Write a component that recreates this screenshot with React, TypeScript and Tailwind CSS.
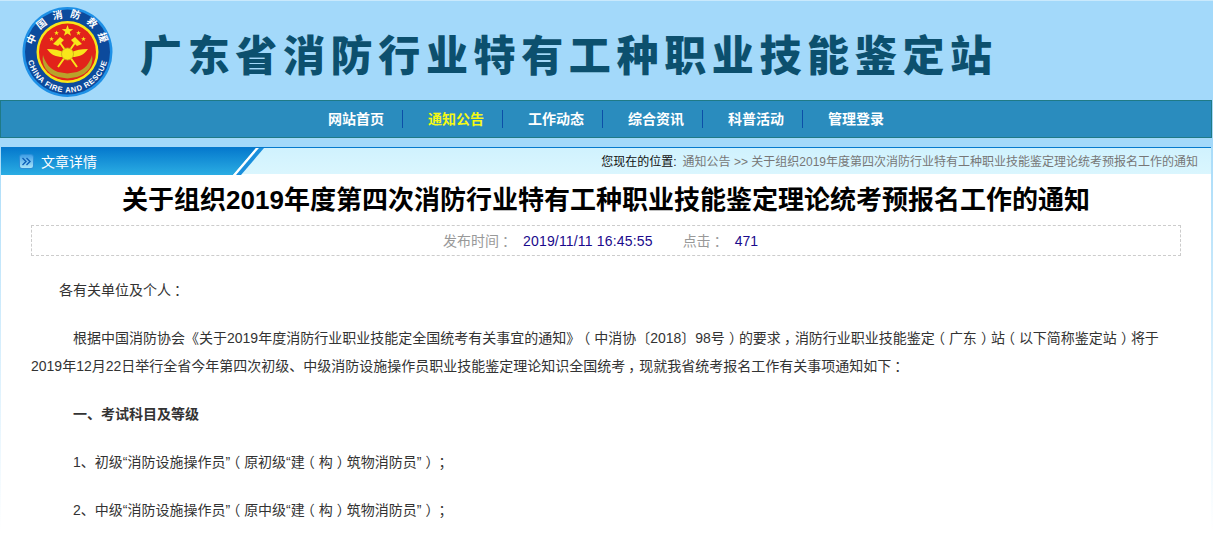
import React from 'react'

const NAV = ['网站首页', '通知公告', '工作动态', '综合资讯', '科普活动', '管理登录']
const ARTICLE = '关于组织2019年度第四次消防行业特有工种职业技能鉴定理论统考预报名工作的通知'

// full-width punctuation sits centred in its cell in the reference font
const Punct = ({ text }: { text: string }): JSX.Element => (
  <>
    {text.split(/([（），：；])/).map((part, i) => {
      if (part === '（') return <span key={i} className="inline-block w-[14px] -indent-[4px] whitespace-nowrap">{part}</span>
      if (part === '）') return <span key={i} className="inline-block w-[14px] indent-[4px] whitespace-nowrap">{part}</span>
      if (part === '，' || part === '：' || part === '；') return <span key={i} className="inline-block w-[14px] indent-[3px] whitespace-nowrap">{part}</span>
      return part
    })}
  </>
)

const Star = ({ x, y, r }: { x: number; y: number; r: number }): JSX.Element => {
  const points = Array.from({ length: 10 }, (_, i) => {
    const a = (Math.PI / 5) * i - Math.PI / 2
    const d = i % 2 === 0 ? r : r * 0.4
    return `${x + d * Math.cos(a)},${y + d * Math.sin(a)}`
  }).join(' ')
  return <polygon points={points} fill="#f8e61a" />
}

const Logo = (): JSX.Element => (
  <svg width="92" height="90" viewBox="0 0 92 90">
    <defs>
      <path id="arcTop" d="M11 45 A34.5 34.5 0 0 1 80 45" />
      <path id="arcBottom" d="M5 45 A40.5 40.5 0 0 0 86 45" />
    </defs>
    <circle cx="45.5" cy="45" r="45" fill="#1e90e6" />
    <circle cx="45.5" cy="45" r="42.5" fill="#0c4a9c" />
    <circle cx="45.5" cy="45" r="31" fill="#f8e61a" />
    <circle cx="45.5" cy="45" r="28.5" fill="#e2231a" />
    <text fontSize="10" fontWeight="700" fill="#fff" fontFamily="'Noto Sans CJK SC', sans-serif" letterSpacing="6.6" textAnchor="middle">
      <textPath href="#arcTop" startOffset="52%">中国消防救援</textPath>
    </text>
    <text fontSize="7.6" fontWeight="700" fill="#fff" fontFamily="'Liberation Sans', sans-serif" letterSpacing="0.65" textAnchor="middle">
      <textPath href="#arcBottom" startOffset="50%">CHINA FIRE AND RESCUE</textPath>
    </text>
    <Star x={45.5} y={24} r={6} />
    <Star x={34.5} y={26} r={2.6} />
    <Star x={56.5} y={26} r={2.6} />
    <Star x={29.5} y={32} r={2.6} />
    <Star x={61.5} y={32} r={2.6} />
    {/* wreath */}
    <path d="M21 48 C19 58 25 67 36 70 L45.5 71.5 L55 70 C66 67 72 58 70 48 C68 56 63 62 55 65 L45.5 66.5 L36 65 C28 62 23 56 21 48 Z" fill="#b9a22a" />
    {/* crossed hammers */}
    <path d="M36 33 L55 60 M55 33 L36 60" stroke="#f8e61a" strokeWidth="2" />
    <path d="M31 37 L38 30 L42 33 L36 39 Z M60 37 L53 30 L49 33 L55 39 Z" fill="#f8e61a" />
    {/* wings */}
    <path d="M25 42 C32 42 37 43 41 45 L41 50 C34 50 29 48 25 42 Z M66 42 C59 42 54 43 50 45 L50 50 C57 50 62 48 66 42 Z" fill="#f8e61a" />
    <circle cx="45.5" cy="47" r="6" fill="#f8e61a" stroke="#c9a61a" strokeWidth="0.8" />
  </svg>
)

const PanelTab = (): JSX.Element => (
  <div className="relative w-[263px] h-[27px] shrink-0">
    <svg className="absolute inset-0" width="263" height="27" viewBox="0 0 263 27">
      <defs>
        <linearGradient id="tabFill" x1="0" y1="0" x2="0" y2="1">
          <stop offset="0" stopColor="#0579cd" />
          <stop offset="1" stopColor="#2bade3" />
        </linearGradient>
      </defs>
      <polygon points="0,0 255,0 232,27 0,27" fill="url(#tabFill)" />
      <polygon points="255,0 258,0 235,27 232,27" fill="#ffffff" />
      <polygon points="258,0 263,0 240,27 235,27" fill="#1a8fdc" />
    </svg>
    <div className="relative flex items-center h-full pl-[18px] gap-[7px]">
      <span className="w-[15px] h-[15px] rounded-[3px] bg-gradient-to-b from-[#3f9fe6] to-[#a8e4f8] border border-[#2b8fd8] flex items-center justify-center">
        <svg width="11" height="9" viewBox="0 0 11 9" fill="none" stroke="#0b5fb8" strokeWidth="1.4">
          <path d="M1.5 1 L5 4.5 L1.5 8 M5.5 1 L9 4.5 L5.5 8" />
        </svg>
      </span>
      <span className="text-[14px] leading-[16px] text-white">文章详情</span>
    </div>
  </div>
)

export default function App(): JSX.Element {
  return (
    <div className="h-[533px] w-[1213px] overflow-hidden bg-white font-['Liberation_Sans','Noto_Sans_CJK_SC',sans-serif] [text-spacing-trim:space-all]">
      <div className="bg-[#a3d9fa] border-t border-[#c9e9fc]">
        <header className="h-[99px] flex items-start pl-[22px] pt-[6px]">
          <Logo />
          <h1 className="ml-[26px] mt-[21px] text-[42px] leading-[50px] tracking-[5.65px] font-black text-[#0c506e] font-['Noto_Sans_CJK_SC',sans-serif] whitespace-nowrap">
            广东省消防行业特有工种职业技能鉴定站
          </h1>
        </header>
        <nav className="h-[38px] mr-px bg-[#2a8cbe] border border-[#1f7a86] flex items-center justify-center pr-[6px]">
          {NAV.map((label, i) => (
            <div key={label} className={`w-[100px] h-[18px] pl-[25px] flex items-center ${i < NAV.length - 1 ? 'border-r border-[#0c4fa8]' : ''}`}>
              <a className={`text-[14px] font-bold leading-none ${i === 1 ? 'text-[#f4f814]' : 'text-white'}`}>{label}</a>
            </div>
          ))}
        </nav>
        <div className="h-[10px]" />
      </div>
      <div className="h-[385px] pl-px pr-[2px] bg-gradient-to-b from-[#a9dcf9] to-white">
        <div className="h-full bg-white">
          <div className="h-[27px] flex justify-between border-t border-[#0579cd] bg-gradient-to-b from-[#d0f2fe] to-[#daf6fe] -mt-px pr-[13px]">
            <PanelTab />
            <div className="text-[12px] leading-[29px] whitespace-nowrap text-[#777]">
              <span className="text-[#111]">您现在的位置:</span>
              <span className="ml-[6px]">通知公告 &gt;&gt; {ARTICLE}</span>
            </div>
          </div>
          <h2 className="mt-[6px] text-center text-[26px] leading-[40px] font-bold text-black">{ARTICLE}</h2>
          <div className="mx-[30px] mt-[5px] h-[31px] border border-dashed border-[#ccc] flex items-center justify-center text-[14px] text-[#999] pr-[11px] pt-[2px] whitespace-nowrap">
            <span><Punct text="发布时间：" /></span>
            <span className="ml-[10px] text-[#1a0a8c] tracking-[0.17px]">2019/11/11 16:45:55</span>
            <span className="ml-[30px]"><Punct text="点击：" /></span>
            <span className="ml-[10px] text-[#1a0a8c]">471</span>
          </div>
          <article className="mx-[30px] mt-[20px] text-[14px] leading-[28px] text-[#333] flex flex-col gap-[20px]">
            <p className="pl-[28px]"><Punct text="各有关单位及个人：" /></p>
            <p className="indent-[42px]">
              <Punct text="根据中国消防协会《关于2019年度消防行业职业技能定全国统考有关事宜的通知》（中消协〔2018〕98号）的要求，消防行业职业技能鉴定（广东）站（以下简称鉴定站）将于2019年12月22日举行全省今年第四次初级、中级消防设施操作员职业技能鉴定理论知识全国统考，现就我省统考报名工作有关事项通知如下：" />
            </p>
            <p className="pl-[42px] font-bold">一、考试科目及等级</p>
            <p className="pl-[42px]"><Punct text="1、初级“消防设施操作员”（原初级“建（构）筑物消防员”）；" /></p>
            <p className="pl-[42px]"><Punct text="2、中级“消防设施操作员”（原中级“建（构）筑物消防员”）；" /></p>
          </article>
        </div>
      </div>
    </div>
  )
}
